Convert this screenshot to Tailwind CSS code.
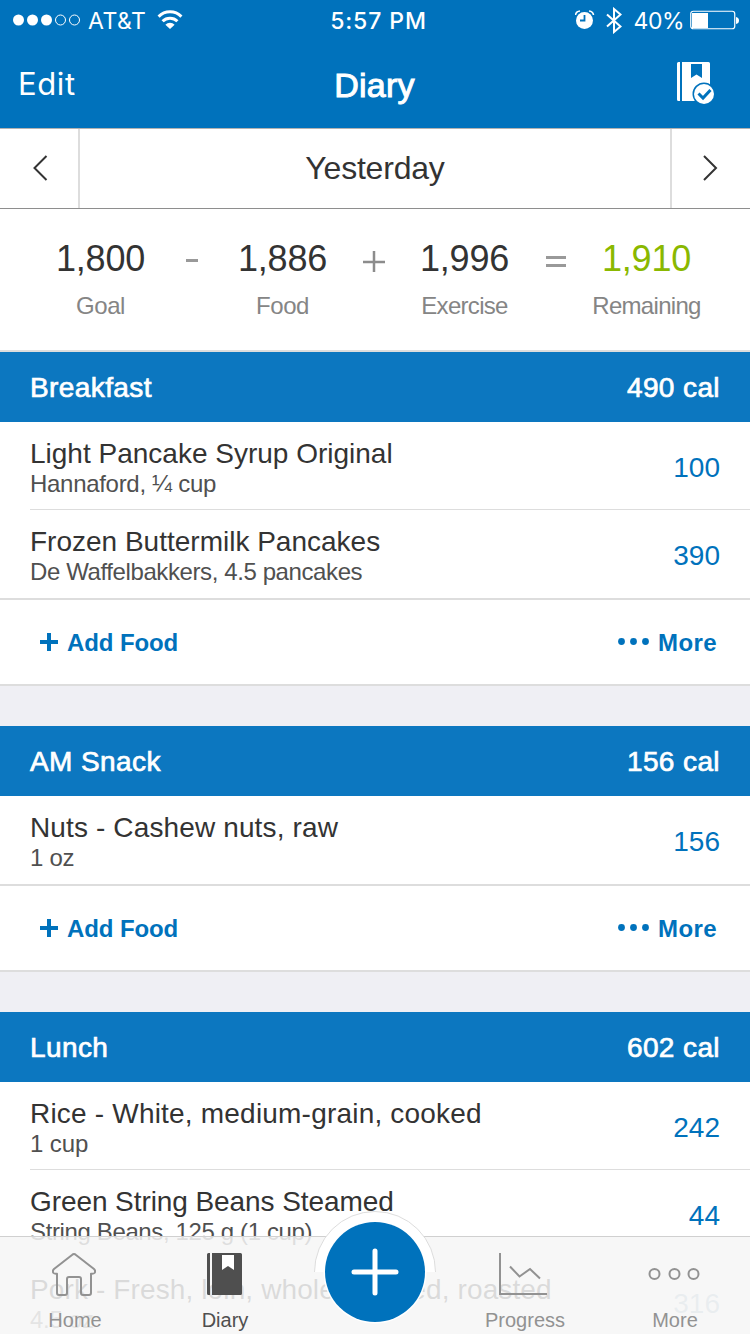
<!DOCTYPE html>
<html lang="en">
<head>
  <meta charset="UTF-8">
  <meta name="viewport" content="width=device-width, initial-scale=1.0">
  <title>Diary</title>
  <script src="https://cdn.jsdelivr.net/npm/@tailwindcss/browser@4"></script>
</head>
<body class="relative w-[750px] h-[1334px] overflow-hidden bg-[#efeff4] font-['Liberation_Sans',Arial,sans-serif] text-[#333]">

  <!-- Status bar + nav bar -->
  <header class="h-32 bg-[#0072bc] text-white">
    <div class="grid grid-cols-3 h-10 pl-[13px] pr-[11px] items-center font-[Inter,sans-serif] text-[23px]">
      <div class="flex items-center">
        <svg class="w-[68px] h-3" viewBox="0 0 68 12" fill="#fff">
          <circle cx="5.5" cy="6" r="5.5"/><circle cx="19.5" cy="6" r="5.5"/><circle cx="33.5" cy="6" r="5.5"/>
          <g fill="none" stroke="#fff"><circle cx="47.5" cy="6" r="5"/><circle cx="61.5" cy="6" r="5"/></g>
        </svg>
        <span class="ml-[7px] pt-[2px] tracking-[0.5px]">AT&amp;T</span>
        <svg class="ml-[11px] w-[26px] h-5" viewBox="0 0 26 20" fill="none" stroke="#fff" stroke-width="3">
          <path d="M1.600 6.600a16 16 0 0 1 22.800 0"/>
          <path d="M5.600 11.300a10.500 10.500 0 0 1 14.800 0"/>
          <path d="M13 19l-4.600-4.300a6.500 6.500 0 0 1 9.200 0z" fill="#fff" stroke="none"/>
        </svg>
      </div>
      <div class="pl-[5px] pt-[2px] text-center font-medium tracking-[0.9px]">5:57 PM</div>
      <div class="flex items-center justify-end">
        <svg class="w-5 h-5" viewBox="0 0 20 20" fill="none" stroke="#fff">
          <circle cx="9.500" cy="10.500" r="8.500" fill="#fff" stroke="none"/>
          <path d="M.5 5Q1 1.500 5 1M18.500 5Q18 1.500 14 1" stroke-width="1.600"/>
          <path d="M9.500 5v5.500H5" stroke="#0072bc" stroke-width="1.800"/>
        </svg>
        <svg class="ml-[11px] w-4 h-[27px]" viewBox="0 0 16 27" fill="none" stroke="#fff" stroke-width="2">
          <path d="M1 7.500l13.500 12-6.500 5.500V2l6.500 5.500-13.500 12"/>
        </svg>
        <span class="ml-3 pt-[2px] tracking-[-0.5px]">40%</span>
        <svg class="ml-[6px] w-[49px] h-5" viewBox="0 0 49 20">
          <rect x=".75" y="1.250" width="44" height="17.500" rx="2.500" fill="none" stroke="#fff" stroke-width="1.200"/>
          <rect x="2" y="3" width="16" height="15" fill="#fff"/>
          <path d="M46 7q3 .5 3 3.500t-3 3.500z" fill="#fff"/>
        </svg>
      </div>
    </div>
    <div class="grid grid-cols-3 h-[88px] items-center pl-[18px] pr-[35px]">
      <div class="pt-[1px] font-[Inter,sans-serif] text-[31px] tracking-[0.6px]">Edit</div>
      <h1 class="pl-[16px] pt-[2px] text-center text-[34px] tracking-[0.2px] [-webkit-text-stroke:1px_#fff]">Diary</h1>
      <svg class="mb-[1px] justify-self-end w-[38px] h-[43px]" viewBox="0 0 38 43" fill="#fff">
        <path d="M1.500 0H3v39H1.500Q0 39 0 37.500v-36Q0 0 1.500 0zM5 0h26.500Q33 0 33 1.500V39H5z"/>
        <path d="M14 2h11v14l-5.500-3.500L14 16z" fill="#0072bc"/>
        <circle cx="27" cy="32" r="11.500" fill="#0072bc"/>
        <circle cx="27" cy="32" r="10"/>
        <path d="M21.500 31.500l4.500 4.500 7.500-8" fill="none" stroke="#0072bc" stroke-width="3"/>
      </svg>
    </div>
  </header>

  <!-- Date picker -->
  <div class="flex h-[81px] border-t border-b border-t-[#b2b2b2] border-b-[#8e8e8e] bg-white">
    <button class="flex w-20 items-center justify-center border-r-2 border-[#ddd] pb-[2px] pl-[2px]">
      <svg class="w-4 h-[26px]" viewBox="0 0 16 26" fill="none" stroke="#333" stroke-width="2"><path d="M14.500 1L2.500 13l12 12"/></svg>
    </button>
    <div class="flex flex-1 items-center justify-center pb-[2px] text-[32px] tracking-[-0.2px]">Yesterday</div>
    <button class="flex w-20 items-center justify-center border-l-2 border-[#ddd] pb-[2px]">
      <svg class="w-4 h-[26px]" viewBox="0 0 16 26" fill="none" stroke="#333" stroke-width="2"><path d="M1 1l12 12L1 25"/></svg>
    </button>
  </div>

  <!-- Calorie summary -->
  <div class="flex h-[143px] justify-center border-b-2 border-[#ddd] bg-white pr-[3px] pt-[29px] text-center">
    <div class="w-[120px]">
      <div class="text-[36px] leading-[42px] tracking-[-0.2px]">1,800</div>
      <div class="mt-3 text-[24px] leading-7 tracking-[-0.4px] text-[#858585]">Goal</div>
    </div>
    <svg class="w-[62px] h-[42px]" viewBox="0 0 62 42" stroke="#999" stroke-width="3"><path d="M25 22.500h12"/></svg>
    <div class="w-[120px]">
      <div class="text-[36px] leading-[42px] tracking-[-0.2px]">1,886</div>
      <div class="mt-3 text-[24px] leading-7 tracking-[-0.4px] text-[#858585]">Food</div>
    </div>
    <svg class="w-[62px] h-[42px]" viewBox="0 0 62 42" stroke="#8c8c8c" stroke-width="2.500"><path d="M20 24h22M31 13v21"/></svg>
    <div class="w-[120px]">
      <div class="text-[36px] leading-[42px] tracking-[-0.2px]">1,996</div>
      <div class="mt-3 text-[24px] leading-7 tracking-[-0.7px] text-[#858585]">Exercise</div>
    </div>
    <svg class="w-[62px] h-[42px]" viewBox="0 0 62 42" stroke="#999" stroke-width="3"><path d="M21 19.500h20M21 27.500h20"/></svg>
    <div class="w-[120px]">
      <div class="text-[36px] leading-[42px] tracking-[-0.2px] text-[#8ab800]">1,910</div>
      <div class="mt-3 text-[24px] leading-7 tracking-[-0.7px] text-[#858585]">Remaining</div>
    </div>
  </div>

  <!-- Breakfast -->
  <section class="mb-10">
    <div class="flex h-[70px] items-center justify-between bg-[#0c77c0] px-[30px] pt-[2px] text-[28px] text-white tracking-[0.4px] [-webkit-text-stroke:0.7px_#fff]">
      <h2>Breakfast</h2><span>490 cal</span>
    </div>
    <div class="bg-white pl-[30px]">
      <div class="flex h-[88px] items-center justify-between border-b border-[#ddd] pr-[30px]">
        <div class="pt-[4px]">
          <div class="text-[28px] leading-8">Light Pancake Syrup Original</div>
          <div class="text-[24px] leading-7 tracking-[-0.3px] text-[#505050]">Hannaford, ¼ cup</div>
        </div>
        <span class="pt-1 text-[28px] text-[#0072bc]">100</span>
      </div>
    </div>
    <div class="flex h-[90px] items-center justify-between border-b-2 border-[#ddd] bg-white px-[30px]">
      <div class="pt-[4px]">
        <div class="text-[28px] leading-8">Frozen Buttermilk Pancakes</div>
        <div class="text-[24px] leading-7 tracking-[-0.4px] text-[#505050]">De Waffelbakkers, 4.5 pancakes</div>
      </div>
      <span class="pt-1 text-[28px] text-[#0072bc]">390</span>
    </div>
    <div class="flex h-[86px] items-center justify-between border-b-2 border-[#ddd] bg-white pl-10 pr-[33px] pt-[2px] text-[24px] font-bold text-[#0072bc]">
      <button class="flex items-center gap-[9px]">
        <svg class="mb-[2px] w-[18px] h-[18px]" viewBox="0 0 18 18" stroke="currentColor" stroke-width="4"><path d="M0 9h18M9 0v18"/></svg>
        <span class="tracking-[-0.1px]">Add Food</span>
      </button>
      <button class="flex items-center gap-2">
        <svg class="w-8 h-[10px]" viewBox="0 0 32 10" fill="currentColor"><circle cx="3.500" cy="3.500" r="3.400"/><circle cx="15.500" cy="3.500" r="3.400"/><circle cx="27.500" cy="3.500" r="3.400"/></svg>
        <span class="tracking-[0.4px]">More</span>
      </button>
    </div>
  </section>

  <!-- AM Snack -->
  <section class="mb-10">
    <div class="flex h-[70px] items-center justify-between bg-[#0c77c0] px-[30px] pt-[2px] text-[28px] text-white tracking-[0.4px] [-webkit-text-stroke:0.7px_#fff]">
      <h2>AM Snack</h2><span>156 cal</span>
    </div>
    <div class="flex h-[90px] items-center justify-between border-b-2 border-[#ddd] bg-white px-[30px]">
      <div class="pt-[4px]">
        <div class="text-[28px] leading-8 tracking-[0.13px]">Nuts - Cashew nuts, raw</div>
        <div class="text-[24px] leading-7 tracking-[-0.3px] text-[#505050]">1 oz</div>
      </div>
      <span class="pt-1 text-[28px] text-[#0072bc]">156</span>
    </div>
    <div class="flex h-[86px] items-center justify-between border-b-2 border-[#ddd] bg-white pl-10 pr-[33px] pt-[2px] text-[24px] font-bold text-[#0072bc]">
      <button class="flex items-center gap-[9px]">
        <svg class="mb-[2px] w-[18px] h-[18px]" viewBox="0 0 18 18" stroke="currentColor" stroke-width="4"><path d="M0 9h18M9 0v18"/></svg>
        <span class="tracking-[-0.1px]">Add Food</span>
      </button>
      <button class="flex items-center gap-2">
        <svg class="w-8 h-[10px]" viewBox="0 0 32 10" fill="currentColor"><circle cx="3.500" cy="3.500" r="3.400"/><circle cx="15.500" cy="3.500" r="3.400"/><circle cx="27.500" cy="3.500" r="3.400"/></svg>
        <span class="tracking-[0.4px]">More</span>
      </button>
    </div>
  </section>

  <!-- Lunch -->
  <section>
    <div class="flex h-[70px] items-center justify-between bg-[#0c77c0] px-[30px] pt-[2px] text-[28px] text-white tracking-[0.4px] [-webkit-text-stroke:0.7px_#fff]">
      <h2>Lunch</h2><span>602 cal</span>
    </div>
    <div class="bg-white pl-[30px]">
      <div class="flex h-[88px] items-center justify-between border-b border-[#ddd] pr-[30px]">
        <div class="pt-[4px]">
          <div class="text-[28px] leading-8 tracking-[0.2px]">Rice - White, medium-grain, cooked</div>
          <div class="text-[24px] leading-7 tracking-[-0.1px] text-[#505050]">1 cup</div>
        </div>
        <span class="pt-1 text-[28px] text-[#0072bc]">242</span>
      </div>
      <div class="flex h-[88px] items-center justify-between pr-[30px]">
        <div class="pt-[4px]">
          <div class="text-[28px] leading-8 tracking-[-0.08px]">Green String Beans Steamed</div>
          <div class="text-[24px] leading-7 tracking-[-0.37px] text-[#505050]">String Beans, 125 g (1 cup)</div>
        </div>
        <span class="pt-1 text-[28px] text-[#0072bc]">44</span>
      </div>
      <div class="flex h-[88px] items-center justify-between pr-[30px]">
        <div class="pt-[4px]">
          <div class="text-[28px] leading-8 tracking-[0.12px]">Pork - Fresh, loin, whole, cooked, roasted</div>
          <div class="text-[24px] leading-7 tracking-[-0.3px] text-[#505050]/80">4.5 oz</div>
        </div>
        <span class="pt-1 text-[28px] text-[#3c6a90]/50">316</span>
      </div>
    </div>
  </section>

  <!-- Tab bar, translucent over the list -->
  <nav class="absolute bottom-0 left-0 grid h-[98px] w-full grid-cols-5 border-t border-[#d0d0d0] bg-[#f6f6f6]/86 text-[20px] text-[#929292]">
    <a class="flex flex-col items-center pt-4">
      <svg class="mr-[2px] w-11 h-[43px]" viewBox="0 0 44 43" fill="none" stroke="#929292" stroke-width="2" stroke-linejoin="round">
        <path d="M22 1q1 0 2 1l18 14q2 2 .5 4-.8 1-3.500.7V40q0 2-2 2h-6q-2 0-2-2V26q0-2-2-2H17q-2 0-2 2v14q0 2-2 2H7q-2 0-2-2V20.700q-2.700.3-3.500-.7-1.500-2 .5-4L20 2q1-1 2-1z"/>
      </svg>
      <span class="mt-3 leading-6">Home</span>
    </a>
    <a class="flex flex-col items-center pt-4 text-[#4f4f4f]">
      <svg class="mr-[2px] w-[35px] h-[43px]" viewBox="0 0 35 43" fill="#4f4f4f">
        <path d="M1.500 0H3v42H1.500Q0 42 0 40.500v-39Q0 0 1.500 0zM5 0h28.500Q35 0 35 1.500v39Q35 42 33.500 42H5z"/>
        <path d="M15 2h12v15l-6-4-6 4z" fill="#fff"/>
      </svg>
      <span class="mt-3 leading-6">Diary</span>
    </a>
    <div></div>
    <a class="flex flex-col items-center pt-4">
      <svg class="mr-1 w-[48px] h-[43px]" viewBox="0 0 48 43" fill="none" stroke="#929292" stroke-width="2">
        <path d="M1 0v41h47M11 13.500l9.500 10L31 16l10 9.500"/>
      </svg>
      <span class="mt-3 leading-6">Progress</span>
    </a>
    <a class="flex flex-col items-center pt-4">
      <svg class="mr-[2px] w-[52px] h-[43px]" viewBox="0 0 52 43" fill="none" stroke="#929292" stroke-width="2">
        <circle cx="6.500" cy="21" r="5"/><circle cx="26.500" cy="21" r="5"/><circle cx="45.500" cy="21" r="5"/>
      </svg>
      <span class="mt-3 leading-6">More</span>
    </a>
  </nav>

  <!-- Add button -->
  <svg class="absolute left-[313px] top-[1210px] w-[124px] h-[116px]" viewBox="0 0 124 116">
    <path d="M1.500 62a60.500 60.500 0 0 1 121 0z" fill="#fff"/>
    <path d="M1.500 62a60.500 60.500 0 0 1 121 0" fill="none" stroke="#ddd"/>
    <circle cx="62" cy="62" r="51.500" fill="#fff"/>
    <circle cx="62" cy="62" r="50" fill="#0072bc"/>
    <path d="M41 62h42M62 41v42" stroke="#fff" stroke-width="5" stroke-linecap="round"/>
  </svg>

</body>
</html>
